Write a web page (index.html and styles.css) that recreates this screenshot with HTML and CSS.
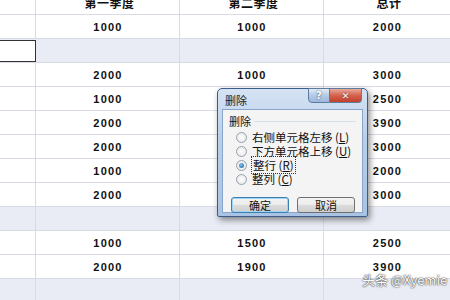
FILE: index.html
```html
<!DOCTYPE html>
<html lang="zh-CN">
<head>
    <meta charset="UTF-8">
    <title>删除</title>
    <link rel="stylesheet" href="styles.css">
</head>
<body>
    <div class="sheet">
        <div class="row head"><div class="cell"></div><div class="cell">第一季度</div><div class="cell">第二季度</div><div class="cell">总计</div></div>
        <div class="row"><div class="cell"></div><div class="cell">1000</div><div class="cell">1000</div><div class="cell">2000</div></div>
        <div class="row shade"><div class="cell active"></div><div class="cell"></div><div class="cell"></div><div class="cell"></div></div>
        <div class="row"><div class="cell"></div><div class="cell">2000</div><div class="cell">1000</div><div class="cell">3000</div></div>
        <div class="row"><div class="cell"></div><div class="cell">1000</div><div class="cell">1500</div><div class="cell">2500</div></div>
        <div class="row"><div class="cell"></div><div class="cell">2000</div><div class="cell">1900</div><div class="cell">3900</div></div>
        <div class="row"><div class="cell"></div><div class="cell">2000</div><div class="cell">1000</div><div class="cell">3000</div></div>
        <div class="row"><div class="cell"></div><div class="cell">1000</div><div class="cell">1000</div><div class="cell">2000</div></div>
        <div class="row"><div class="cell"></div><div class="cell">2000</div><div class="cell">1000</div><div class="cell">3000</div></div>
        <div class="row shade"><div class="cell"></div><div class="cell"></div><div class="cell"></div><div class="cell"></div></div>
        <div class="row"><div class="cell"></div><div class="cell">1000</div><div class="cell">1500</div><div class="cell">2500</div></div>
        <div class="row"><div class="cell"></div><div class="cell">2000</div><div class="cell">1900</div><div class="cell">3900</div></div>
        <div class="row shade"><div class="cell"></div><div class="cell"></div><div class="cell"></div><div class="cell"></div></div>
    </div>

    <div class="dialog">
        <div class="titlebar">
            <span class="title">删除</span>
            <div class="caption-btns">
                <span class="cap help">?</span>
                <span class="cap close">✕</span>
            </div>
        </div>
        <div class="client">
            <div class="group">
                <div class="group-label">删除</div>
                <label class="opt"><span class="radio"></span>右侧单元格左移 (<u>L</u>)</label>
                <label class="opt"><span class="radio"></span>下方单元格上移 (<u>U</u>)</label>
                <label class="opt"><span class="radio on"></span><span class="focus">整行 (<u>R</u>)</span></label>
                <label class="opt"><span class="radio"></span>整列 (<u>C</u>)</label>
            </div>
            <div class="buttons">
                <button class="btn default">确定</button>
                <button class="btn">取消</button>
            </div>
        </div>
    </div>

    <div class="watermark">头条 @Xyemie</div>
</body>
</html>
```

FILE: styles.css
```css
body {
    margin: 0;
    background: #fff;
    font-family: "Liberation Sans", "Noto Sans CJK SC", sans-serif;
    overflow: hidden;
}
.sheet {
    width: 450px;
}
.row {
    display: grid;
    grid-template-columns: 36px 144px 144px 1fr;
    grid-template-rows: minmax(0, 1fr);
    height: 24px;
    border-bottom: 1px solid #d8dbe4;
    box-sizing: border-box;
}
.row.shade {
    background: #e9ecf4;
}
.cell {
    border-right: 1px solid #d8dbe4;
    display: flex;
    align-items: center;
    justify-content: center;
    font-size: 11px;
    font-weight: bold;
    color: #111;
    letter-spacing: 1.2px;
    padding-left: 1px;
}
.cell:last-child {
    border-right: none;
}
.row .cell.active {
    background: #fff;
    border: 1px solid #333;
    margin: 1px 0 0 -1px;
}
.row.head {
    height: 15px;
    overflow: hidden;
}
.row.head .cell {
    align-items: flex-end;
    font-size: 12px;
    line-height: 22px;
    letter-spacing: 0.5px;
    padding-left: 4px;
    font-family: "Noto Sans CJK SC", sans-serif;
}

/* dialog */
.dialog {
    position: absolute;
    left: 217px;
    top: 88px;
    width: 151px;
    height: 129px;
    box-sizing: border-box;
    border: 1px solid #3a5d8c;
    border-radius: 5px 5px 2px 2px;
    background: linear-gradient(#d5e3f3, #b8cfea 40%, #a9c3e4);
    box-shadow: 2px 3px 6px rgba(0, 0, 0, 0.45);
    font-family: "Noto Sans CJK SC", sans-serif;
    font-size: 11px;
    color: #111;
}
.titlebar {
    height: 19px;
    display: flex;
    justify-content: space-between;
}
.title {
    padding: 4px 0 0 7px;
    line-height: 14px;
    color: #222;
}
.caption-btns {
    display: flex;
    margin-right: 5px;
    margin-top: -1px;
}
.cap {
    height: 15px;
    display: flex;
    align-items: center;
    justify-content: center;
    box-sizing: border-box;
    border: 1px solid #5e7ba0;
    font-family: "DejaVu Sans", sans-serif;
    font-weight: bold;
    color: #fff;
    text-shadow: 0 0 2px #345;
}
.help {
    width: 22px;
    border-radius: 0 0 0 4px;
    background: linear-gradient(#e4edf8, #b3c9e6 50%, #9db8dc);
    font-size: 10px;
}
.close {
    width: 32px;
    border-left: none;
    border-radius: 0 0 4px 0;
    background: linear-gradient(#e9a99b, #d4624d 50%, #c1402a);
    font-size: 9px;
}
.client {
    margin: 1px 4px 0 4px;
    height: 104px;
    box-sizing: border-box;
    border: 1px solid #8aa5c8;
    background: #f4f4f4;
    padding: 6px 6px 0 6px;
}
.group {
    border-top: 1px solid #d5dfe5;
    position: relative;
    padding-top: 8px;
    margin-top: 5px;
}
.group-label {
    position: absolute;
    top: -8px;
    left: 0;
    background: #f4f4f4;
    padding-right: 3px;
    line-height: 14px;
}
.opt {
    display: flex;
    align-items: center;
    height: 14px;
    padding-left: 7px;
    font-size: 11.5px;
    white-space: nowrap;
}
.radio {
    width: 9px;
    height: 9px;
    border: 1px solid #9aa1a8;
    border-radius: 50%;
    background: radial-gradient(#fff, #dfe2e6);
    margin-right: 5px;
    flex: none;
    position: relative;
}
.radio.on::after {
    content: "";
    position: absolute;
    left: 2px;
    top: 2px;
    width: 5px;
    height: 5px;
    border-radius: 50%;
    background: radial-gradient(circle at 40% 35%, #7fc1f0, #1c5e9c);
}
.focus {
    outline: 1px dotted #333;
    padding: 0 1px;
}
.buttons {
    display: flex;
    justify-content: space-between;
    margin-top: 11px;
    padding: 0 1px 0 2px;
}
.btn {
    width: 58px;
    height: 16px;
    padding: 0;
    border: 1px solid #707070;
    border-radius: 3px;
    background: linear-gradient(#f4f4f4, #ebebeb 50%, #dcdcdc 50%, #cfcfcf);
    font-family: "Noto Sans CJK SC", sans-serif;
    font-size: 11px;
    line-height: 14px;
    color: #111;
}
.btn.default {
    border-color: #3c7fb1;
    box-shadow: inset 0 0 0 1px #9fd6f5;
}

.watermark {
    position: absolute;
    left: 362px;
    top: 270px;
    font-family: "Noto Sans CJK SC", sans-serif;
    font-size: 13px;
    color: #fff;
    text-shadow: 0 0 1px #222, 0 0 2px #444;
}
```
